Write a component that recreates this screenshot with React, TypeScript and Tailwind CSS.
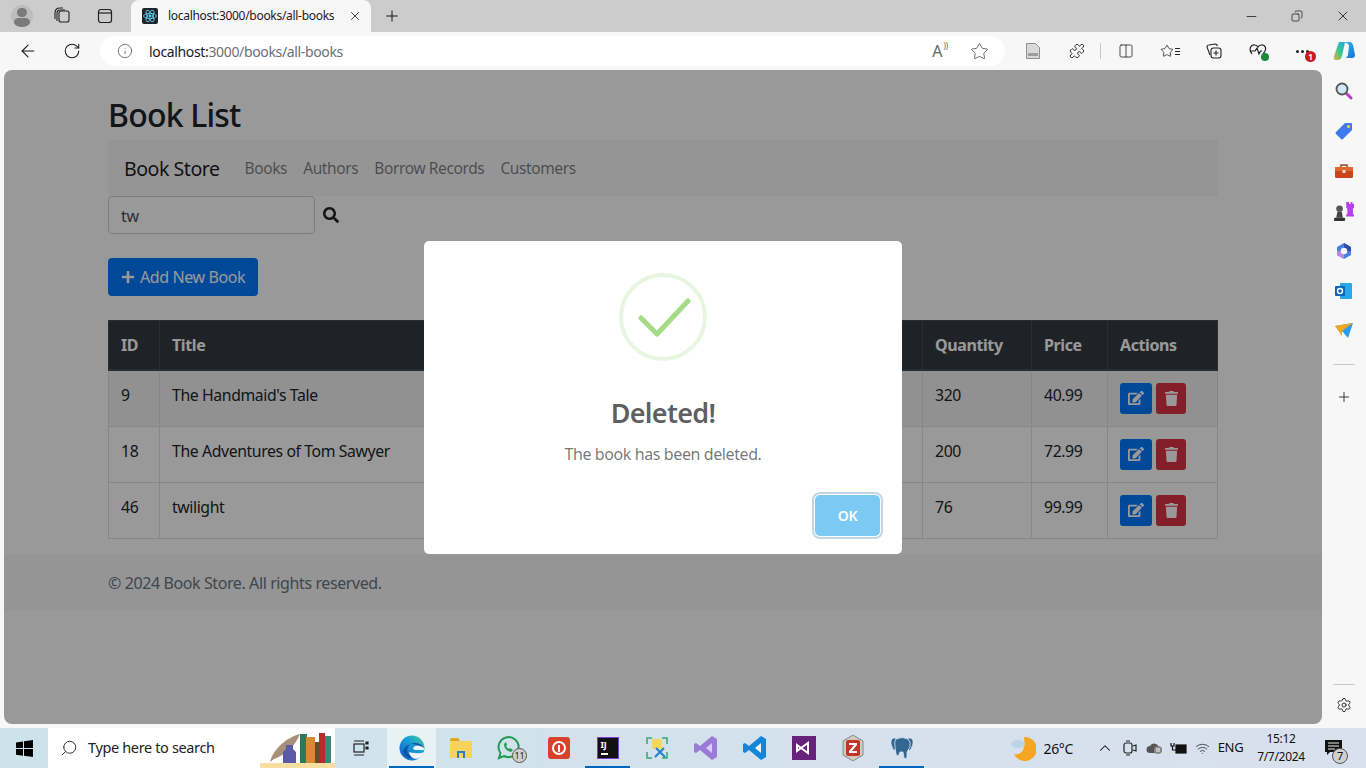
import React from 'react';
import {
  ArrowLeft, RotateCw, Info, Star, Plus, X, Minus, Search, Copy, Puzzle, Columns2, Settings, ChevronUp, Wifi,
} from 'lucide-react';
import { FaEdit, FaPlus, FaSearch, FaTrash } from 'react-icons/fa';

const books = [
  { id: 9, title: "The Handmaid's Tale", quantity: 320, price: '40.99' },
  { id: 18, title: 'The Adventures of Tom Sawyer', quantity: 200, price: '72.99' },
  { id: 46, title: 'twilight', quantity: 76, price: '99.99' },
];

const Slot: React.FC<{ children?: React.ReactNode }> = ({ children }) => (
  <div className="w-11 h-[38px] flex items-center justify-center shrink-0 relative">{children}</div>
);

const TabStrip = () => (
  <div className="h-8 bg-[#cccccc] flex items-end shrink-0">
    <div className="w-[33px] h-8 flex items-center justify-end">
      <div className="w-[22px] h-[22px] rounded-full bg-[#bdbdbd] overflow-hidden flex flex-col items-center">
        <div className="w-[10px] h-[10px] rounded-full bg-[#7a7a7a] mt-[3px]"></div>
        <div className="w-[16px] h-[10px] rounded-full bg-[#7a7a7a] mt-[1px]"></div>
      </div>
    </div>
    <div className="w-[40px] h-8 ml-[-2px] flex items-center justify-end">
      <svg width="18" height="18" viewBox="0 0 18 18" fill="none" stroke="#222" strokeWidth="1.1">
        <rect x="6" y="4" width="10" height="11" rx="2" />
        <path d="M4 14V6q0-3 3-3h5M2 12V6q0-5 5-5h3" />
      </svg>
    </div>
    <div className="w-[42px] h-8 flex items-center justify-end mr-[18px]">
      <svg width="16" height="16" viewBox="0 0 16 16" fill="none" stroke="#222" strokeWidth="1.2">
        <rect x="1.5" y="1.5" width="13" height="13" rx="2.5" />
        <path d="M1.5 5h13" />
      </svg>
    </div>
    <div className="w-[240px] h-8 bg-[#f7f7f7] rounded-t-lg flex items-center pl-[11px] pr-[9px]">
      <svg width="16" height="16" viewBox="0 0 16 16" className="shrink-0">
        <rect width="16" height="16" rx="2" fill="#20232a" />
        <g fill="none" stroke="#61dafb" strokeWidth="0.8">
          <ellipse cx="8" cy="8" rx="6.5" ry="2.6" />
          <ellipse cx="8" cy="8" rx="6.5" ry="2.6" transform="rotate(60 8 8)" />
          <ellipse cx="8" cy="8" rx="6.5" ry="2.6" transform="rotate(120 8 8)" />
        </g>
        <circle cx="8" cy="8" r="1.4" fill="#61dafb" />
      </svg>
      <span className="ml-[10px] text-[12px] text-[#1a1a1a] flex-1 truncate">localhost:3000/books/all-books</span>
      <X size={14} strokeWidth={1.5} className="text-[#222]" />
    </div>
    <div className="w-[42px] h-8 flex items-center justify-center">
      <Plus size={18} strokeWidth={1.3} className="text-[#111]" />
    </div>
    <div className="flex-1"></div>
    <div className="w-[46px] h-8 flex items-center justify-center"><Minus size={15} strokeWidth={1.2} className="text-[#111]" /></div>
    <div className="w-[46px] h-8 flex items-center justify-center"><Copy size={12} strokeWidth={1.4} className="text-[#111] -scale-x-100" /></div>
    <div className="w-[46px] h-8 flex items-center justify-center"><X size={16} strokeWidth={1.2} className="text-[#111]" /></div>
  </div>
);

const Toolbar = () => (
  <div className="h-[38px] bg-[#f7f7f7] flex items-start pl-[6px] shrink-0">
    <Slot><ArrowLeft size={20} strokeWidth={1.3} className="text-[#1a1a1a]" /></Slot>
    <Slot><RotateCw size={18} strokeWidth={1.4} className="text-[#1a1a1a]" /></Slot>
    <div className="ml-[6px] mt-1 w-[905px] h-[30px] bg-white rounded-full flex items-center pl-[17px] pr-[16px] shrink-0">
      <Info size={16} strokeWidth={1.2} className="text-[#555]" />
      <span className="ml-4 text-[14px] text-[#6a7078]"><span className="text-[#1a1a1a]">localhost:</span>3000/books/all-books</span>
      <div className="flex-1"></div>
      <div className="relative mr-[28px] text-[16px] text-[#666] leading-none">A<span className="absolute -right-[6px] -top-[1px] text-[8px]">))</span></div>
      <Star size={19} strokeWidth={1.1} className="text-[#555]" />
    </div>
    <div className="ml-[6px] flex">
      <Slot>
        <svg width="14" height="16" viewBox="0 0 14 16"><path d="M.5.5h9l4 4v11H.5z" fill="#d9d9d9" stroke="#8f8f8f" /><rect x="2" y="10" width="10" height="3" fill="#9d9d9d" /></svg>
      </Slot>
      <Slot><Puzzle size={16} strokeWidth={1.3} className="text-[#222]" /></Slot>
    </div>
    <div className="w-px h-4 bg-[#c9c9c9] mt-[11px] mx-[1px] shrink-0"></div>
    <div className="flex ml-[2px]">
      <Slot><Columns2 size={16} strokeWidth={1.2} className="text-[#222]" /></Slot>
      <Slot>
        <div className="flex items-center">
          <Star size={14} strokeWidth={1.3} className="text-[#222]" />
          <div className="flex flex-col gap-[2px] ml-[1px]"><div className="w-[5px] h-px bg-[#222]"></div><div className="w-[5px] h-px bg-[#222]"></div><div className="w-[5px] h-px bg-[#222]"></div></div>
        </div>
      </Slot>
      <Slot>
        <svg width="18" height="18" viewBox="0 0 18 18" fill="none" stroke="#222" strokeWidth="1.1">
          <path d="M5 13 2 5q0-2 2-2l6-1q2 0 2.5 2" />
          <rect x="6" y="6" width="10" height="10" rx="2.5" fill="#f7f7f7" />
          <path d="M11 8.5v5M8.5 11h5" />
        </svg>
      </Slot>
      <Slot>
        <div className="relative">
          <svg width="18" height="17" viewBox="0 0 18 17" fill="none" stroke="#222" strokeWidth="1.2">
            <path d="M3 11C-1 6 2 1 6 2q2 .4 3 2 1-1.6 3-2c4-1 7 4 2 9" />
            <path d="M1 8h5l2-3 2 6 1.5-3H13" />
          </svg>
          <div className="absolute -right-[2px] -bottom-[1px] w-[8px] h-[8px] rounded-full bg-[#1a8a3a]"></div>
        </div>
      </Slot>
      <Slot>
        <div className="flex gap-[2px]"><div className="w-[3px] h-[3px] rounded-full bg-[#222]"></div><div className="w-[3px] h-[3px] rounded-full bg-[#222]"></div><div className="w-[3px] h-[3px] rounded-full bg-[#222]"></div></div>
        <div className="absolute left-[25px] top-[19px] w-[11px] h-[11px] rounded-full bg-[#c71c22] text-white text-[8px] leading-[11px] text-center font-bold">1</div>
      </Slot>
      <div className="w-[40px] h-[38px] flex items-center justify-center shrink-0">
        <svg width="24" height="24" viewBox="0 0 24 24">
          <defs>
            <linearGradient id="cp1" x1="0" y1="0" x2="1" y2="1"><stop offset="0" stopColor="#27c2e8" /><stop offset="1" stopColor="#1b6fd8" /></linearGradient>
            <linearGradient id="cp2" x1="0" y1="1" x2="1" y2="0"><stop offset="0" stopColor="#f5b13d" /><stop offset="0.5" stopColor="#35c98c" /><stop offset="1" stopColor="#2aa7ee" /></linearGradient>
          </defs>
          <path d="M7 3h6l-3 14q-1 4-4 4H3q-2-1-1-4z" fill="url(#cp2)" />
          <path d="M11 3h7q2 0 3 3l2 10q0 3-3 3h-7q3-1 3-4l1-8q0-3-6-4z" fill="url(#cp1)" />
        </svg>
      </div>
    </div>
  </div>
);

const BookTable = () => (
  <table className="w-full table-fixed border-collapse mt-6">
    <thead>
      <tr className="bg-[#343a40] text-white font-bold text-left">
        <th className="w-[51px] h-[49px] px-3 border border-[#454d55] border-b-2">ID</th>
        <th className="px-3 border border-[#454d55] border-b-2">Title</th>
        <th className="w-[109px] px-3 border border-[#454d55] border-b-2">Quantity</th>
        <th className="w-[76px] px-3 border border-[#454d55] border-b-2">Price</th>
        <th className="w-[110px] px-3 border border-[#454d55] border-b-2">Actions</th>
      </tr>
    </thead>
    <tbody className="text-[15.8px]">
      {books.map((book, i) => (
        <tr key={book.id} className={i === 0 ? 'bg-black/5' : ''}>
          <td className="px-3 pt-[13px] pb-[11px] align-top border border-[#dee2e6]">{book.id}</td>
          <td className="px-3 pt-[13px] pb-[11px] align-top border border-[#dee2e6]">{book.title}</td>
          <td className="px-3 pt-[13px] pb-[11px] align-top border border-[#dee2e6]">{book.quantity}</td>
          <td className="px-3 pt-[13px] pb-[11px] align-top border border-[#dee2e6]">{book.price}</td>
          <td className="p-3 align-top border border-[#dee2e6]">
            <div className="flex gap-1">
              <button className="w-8 h-[31px] bg-[#007bff] rounded-[3px] flex items-center justify-center text-white"><FaEdit size={16} /></button>
              <button className="w-[30px] h-[31px] bg-[#dc3545] rounded-[3px] flex items-center justify-center text-white"><FaTrash size={15} /></button>
            </div>
          </td>
        </tr>
      ))}
    </tbody>
  </table>
);

const Page = () => (
  <div className="w-[1318px] h-[654px] bg-white text-[#212529] rounded-lg overflow-hidden relative shrink-0">
    <div className="w-[1110px] ml-[104px] pt-[26px]">
      <h1 className="text-[32px] leading-[38px] font-medium mb-[6px]">Book List</h1>
      <nav className="h-14 bg-[#f8f9fa] flex items-center px-4 pt-px">
        <span className="text-[19.6px] text-black/90 mr-[17px]">Book Store</span>
        <div className="flex text-[15.5px] text-black/50">
          <a className="px-2">Books</a>
          <a className="px-2">Authors</a>
          <a className="px-2">Borrow Records</a>
          <a className="px-2">Customers</a>
        </div>
      </nav>
      <div className="flex items-center">
        <div className="w-[207px] h-[38px] border border-[#ced4da] rounded px-3 pt-[1px] flex items-center text-[#495057]">tw</div>
        <FaSearch size={16} className="ml-2 text-[#212529]" />
      </div>
      <button className="mt-6 h-[38px] w-[150px] bg-[#007bff] text-white rounded flex items-center pl-[13px] gap-[5px]">
        <FaPlus size={14} />
        Add New Book
      </button>
      <BookTable />
    </div>
    <footer className="mt-4 h-14 bg-[#f8f9fa] flex items-center pl-[104px] text-[#6c757d]">
      © 2024 Book Store. All rights reserved.
    </footer>
    <div className="absolute inset-0 bg-black/40 flex items-center justify-center">
      <div className="w-[478px] h-[313px] bg-white rounded-[5px] flex flex-col items-center pt-8">
        <svg width="88" height="88" viewBox="0 0 88 88" fill="none">
          <circle cx="44" cy="44" r="42" stroke="#a5dc86" strokeOpacity="0.25" strokeWidth="4" />
          <path d="M22 45 38 61 69 28" stroke="#a5dc86" strokeWidth="5" strokeLinecap="round" strokeLinejoin="round" />
        </svg>
        <h2 className="mt-[34px] text-[27px] leading-[36px] font-semibold text-black/65">Deleted!</h2>
        <p className="mt-[11px] leading-6 text-black/55">The book has been deleted.</p>
        <div className="w-full flex justify-end pr-[22px] mt-[29px]">
          <button className="w-[65px] h-[41px] bg-[#7cc9f4] text-white text-[14px] font-semibold rounded-[5px] shadow-[0_0_0_1px_#fff,0_0_0_3px_rgba(43,114,165,0.29)]">OK</button>
        </div>
      </div>
    </div>
  </div>
);

const SidebarIcon: React.FC<{ children?: React.ReactNode }> = ({ children }) => (
  <div className="h-10 flex items-center justify-center shrink-0">{children}</div>
);

const Sidebar = () => (
  <div className="w-11 flex flex-col items-stretch pt-[1px] shrink-0">
    <SidebarIcon>
      <svg width="18" height="18" viewBox="0 0 18 18" fill="none">
        <path d="M11 11l5 5" stroke="#b83ec9" strokeWidth="3" strokeLinecap="round" />
        <circle cx="7" cy="7" r="5.5" fill="#cfeaf5" stroke="#555" strokeWidth="1.8" />
      </svg>
    </SidebarIcon>
    <SidebarIcon>
      <svg width="18" height="18" viewBox="0 0 18 18"><path d="M10 1h6q1 0 1 1v6L8 17q-1 1-2 0l-5-5q-1-1 0-2z" fill="#3f78f0" /><circle cx="13.5" cy="4.5" r="1.6" fill="#f6d24a" /></svg>
    </SidebarIcon>
    <SidebarIcon>
      <svg width="18" height="16" viewBox="0 0 18 16"><path d="M6 4V2h6v2" fill="none" stroke="#8a4a2a" strokeWidth="1.5" /><rect y="4" width="18" height="11" rx="1.5" fill="#c8451d" /><rect y="4" width="18" height="4" fill="#e0672e" /><rect x="7.5" y="7" width="3" height="3" fill="#ddd" /></svg>
    </SidebarIcon>
    <SidebarIcon>
      <svg width="20" height="20" viewBox="0 0 18 18"><path d="M12 1h1.500v1.500H15V1h1.500v1.500H18V6l-1 1v5h1v2h-7v-2h1V7l-1-1V1z" fill="#b83ef0" /><circle cx="5" cy="7" r="3" fill="#555" /><path d="M3 10h4l1 5H2z" fill="#444" /><rect y="15" width="10" height="3" rx="1" fill="#333" /></svg>
    </SidebarIcon>
    <SidebarIcon>
      <svg width="18" height="18" viewBox="0 0 18 18"><path d="M9 1 16 5v8l-7 4-7-4V5z" fill="#4d7fe0" /><path d="M9 1 16 5v4H9z" fill="#2b4ea8" /><path d="M9 17l-7-4V9h7z" fill="#b58be8" /><circle cx="9" cy="9" r="3.200" fill="#f7f7f7" /></svg>
    </SidebarIcon>
    <SidebarIcon>
      <svg width="18" height="18" viewBox="0 0 18 18"><rect x="5" y="1" width="12" height="16" rx="1" fill="#28a8ea" /><rect y="4" width="10" height="10" rx="1" fill="#0a64b8" /><circle cx="5" cy="9" r="2.500" fill="none" stroke="#fff" strokeWidth="1.400" /></svg>
    </SidebarIcon>
    <SidebarIcon>
      <svg width="18" height="16" viewBox="0 0 18 16"><path d="M0 3 18 0 13 15 8 9z" fill="#2a9cee" /><path d="M0 3 18 0 7 8v5z" fill="#f2a51e" /></svg>
    </SidebarIcon>
    <div className="h-px bg-[#c9c9c9] mx-[11px] mt-[13px]"></div>
    <div className="h-[63px] pt-px flex items-center justify-center"><Plus size={16} strokeWidth={1.3} className="text-[#222]" /></div>
    <div className="flex-1"></div>
    <div className="h-px bg-[#c9c9c9] mx-[11px]"></div>
    <div className="h-[39px] flex items-center justify-center"><Settings size={16} strokeWidth={1.4} className="text-[#222]" /></div>
  </div>
);

const TaskIcon: React.FC<{ active?: boolean; tinted?: boolean; children?: React.ReactNode }> = ({ active, tinted, children }) => (
  <div className={`w-[49px] h-10 flex items-center justify-center relative shrink-0 ${tinted ? 'bg-white/50' : ''}`}>
    {children}
    {active && <div className="absolute left-[2px] right-[2px] bottom-0 h-[2px] bg-[#0067c0]"></div>}
  </div>
);

const Taskbar = () => (
  <div className="h-10 shrink-0 flex items-center bg-gradient-to-r from-[#cde3ec] to-[#d9e0ee] text-[#111]">
    <div className="w-12 flex items-center justify-center">
      <svg width="17" height="17" viewBox="0 0 17 17" fill="#000"><path d="M0 2.400 7 1.400v6.700H0zM8 1.300 17 0v8.100H8zM0 9h7v6.700L0 14.700zM8 9h9v8L8 15.800z" /></svg>
    </div>
    <div className="w-[287px] h-10 bg-white flex items-center relative overflow-hidden">
      <Search size={18} strokeWidth={1.2} className="ml-[12px] -scale-x-100 text-[#222]" />
      <span className="ml-[10px] text-[14.5px] text-[#222]">Type here to search</span>
      <svg width="76" height="40" viewBox="0 0 76 40" className="absolute right-0 top-0">
        <path d="M1 35h75v5H1z" fill="#f6dfa0" />
        <path d="M11 34C14 22 26 10 41 6 36 18 28 26 15 31z" fill="#a89078" />
        <rect x="41" y="6" width="7" height="29" fill="#2a7a5a" />
        <rect x="47" y="9" width="9" height="26" fill="#d98a2c" />
        <rect x="56" y="14" width="4" height="21" fill="#6a4a2a" />
        <rect x="60" y="5" width="6" height="30" fill="#b92b2b" />
        <rect x="66" y="8" width="6" height="27" fill="#3a8a7a" />
        <path d="M27 17h7v4l3 3v11H24V24l3-3z" fill="#5a5aa8" />
      </svg>
    </div>
    <div className="w-[52px] flex items-center justify-center">
      <svg width="16" height="16" viewBox="0 0 16 16" fill="none" stroke="#222" strokeWidth="1.200"><rect x="1" y="4" width="10" height="8" /><path d="M1 1h10M1 15h10" /><path d="M13 2h2v2h-2zM13 7h2v2h-2z" fill="#222" /></svg>
    </div>
    <TaskIcon active tinted>
      <svg width="26" height="26" viewBox="0 0 26 26">
        <defs><linearGradient id="edge" x1="0" y1="1" x2="1" y2="0"><stop offset="0" stopColor="#0c5cc0" /><stop offset="0.6" stopColor="#1aa0d8" /><stop offset="1" stopColor="#4ad08a" /></linearGradient></defs>
        <circle cx="13" cy="13" r="12.500" fill="url(#edge)" />
        <path d="M25 15q-1-7-9-7-7 0-8 7 0 6 8 8-11 1-12-7 2-6 9-7 7 0 12 6z" fill="#0e4ea3" />
        <path d="M25.500 15c0-3-5-5-9-4-3 1-3 4 0 4h9zM17 18q4 1 8-1-2 6-8 7-6-1-7-7 2 1 7 1z" fill="#eef4f8" />
      </svg>
    </TaskIcon>
    <TaskIcon>
      <svg width="22" height="20" viewBox="0 0 22 20"><path d="M0 2q0-2 2-2h6l2 3H0z" fill="#e0a81c" /><rect y="3" width="22" height="17" rx="1" fill="#f7d25c" /><path d="M7 13h8v7H7z" fill="#2a7fd0" /><path d="M9 15h4v5H9z" fill="#f7d25c" /></svg>
    </TaskIcon>
    <TaskIcon>
      <div className="relative -ml-[3px]">
        <svg width="24" height="24" viewBox="0 0 24 24" fill="none" stroke="#1f9d4d" strokeWidth="2"><path d="M3 22l1.500-5A10 10 0 1 1 8 20z" /><path d="M8 8q0 6 7 8l2-2-3-2-1 1q-2-1-3-3l1-1-1-3z" fill="#1f9d4d" stroke="none" /></svg>
        <div className="absolute -right-[7px] -bottom-[3px] w-[15px] h-[15px] rounded-full bg-[#cfcfcf] border border-[#555] text-[9px] leading-[13px] text-center text-[#222]">11</div>
      </div>
    </TaskIcon>
    <TaskIcon>
      <div className="w-[22px] h-[22px] bg-[#d8412a] rounded-[3px] flex items-center justify-center">
        <div className="w-[14px] h-[14px] rounded-full border-2 border-white flex items-center justify-center"><div className="w-[2px] h-[7px] bg-white"></div></div>
      </div>
    </TaskIcon>
    <TaskIcon active>
      <div className="w-[22px] h-[22px] bg-[#111] border border-[#7a3fd0] flex flex-col pl-[3px] pt-[2px] text-white">
        <span className="text-[9px] leading-[10px] font-bold">IJ</span>
        <div className="w-[7px] h-[2px] bg-white mt-[3px]"></div>
      </div>
    </TaskIcon>
    <TaskIcon>
      <svg width="22" height="22" viewBox="0 0 22 22" fill="none"><path d="M6 2h10v10H6z" fill="#f3d65a" /><path d="M1 7V1h5M16 1h5v6M1 15v6h5M21 15v6h-5" stroke="#35a86b" strokeWidth="1.500" /><path d="M9 20l9-9M10 11l9 9" stroke="#1f7fd0" strokeWidth="2" /></svg>
    </TaskIcon>
    <TaskIcon>
      <svg width="24" height="26" viewBox="0 0 24 26"><path d="M18 1 23 4v18l-5 3L6 15l-4 3-2-1V9l2-1 4 3z" fill="#9a7bd8" /><path d="M18 8v10l-6-5z" fill="#dccdf5" /></svg>
    </TaskIcon>
    <TaskIcon>
      <svg width="24" height="26" viewBox="0 0 24 26"><path d="M18 1 23 4v18l-5 3L6 15l-4 3-2-1V9l2-1 4 3z" fill="#1585d8" /><path d="M18 8v10l-6-5z" fill="#e8f4fc" /></svg>
    </TaskIcon>
    <TaskIcon>
      <div className="w-[24px] h-[24px] bg-[#68217a] flex items-center justify-center">
        <svg width="16" height="14" viewBox="0 0 16 14" fill="none" stroke="#fff" strokeWidth="2"><path d="M1 4l4 3-4 3zM5 7l7-5v10z" /></svg>
      </div>
    </TaskIcon>
    <TaskIcon>
      <svg width="22" height="26" viewBox="0 0 22 26"><path d="M11 0l10 6v14l-10 6L1 20V6z" fill="#cfc9c4" stroke="#888" /><rect x="4" y="5" width="14" height="16" rx="2" fill="#c43327" /><path d="M7 8h8v2l-5 6h5v2H7v-2l5-6H7z" fill="#f3f3f3" /></svg>
    </TaskIcon>
    <TaskIcon active>
      <svg width="24" height="24" viewBox="0 0 24 24" fill="#336791" stroke="#dfe8ee" strokeWidth="0.8">
        <path d="M6 2Q0 1 1 8q1 5 4 7l2-6z" />
        <path d="M18 2q6-1 5 6-1 5-4 7l-2-6z" />
        <path d="M6 3q6-3 12 0 3 3 2 8l-3 5v5q-1 3-3 1l-1-6h-3l-1 3q-2 2-3-1L5 11Q4 5 6 3z" />
      </svg>
    </TaskIcon>
    <div className="flex-1"></div>
    <div className="flex items-center mr-[23px]">
      <svg width="26" height="26" viewBox="0 0 26 26"><path d="M14 2a12 12 0 1 1-10 17q12 2 10-17z" fill="#f5a623" /><ellipse cx="8" cy="9" rx="7" ry="4" fill="#bcd3ea" /></svg>
      <span className="ml-[8px] text-[14px]">26°C</span>
    </div>
    <ChevronUp size={18} strokeWidth={1.400} className="mr-[4px]" />
    <div className="w-6 flex justify-center">
      <svg width="14" height="16" viewBox="0 0 14 16" fill="none" stroke="#222" strokeWidth="1.200"><rect x="1" y="3" width="8" height="10" rx="2" /><path d="M10 6l3-1v6l-3-1M3 1h4M3 15h4" /></svg>
    </div>
    <div className="w-6 flex justify-center">
      <svg width="17" height="14" viewBox="0 0 17 14"><path d="M4 12a3.500 3.500 0 0 1 0-7 5 5 0 0 1 9 1 3 3 0 0 1 0 6z" fill="#555" /><circle cx="12" cy="9" r="4" fill="#888" /><path d="M11 7v4M13 7v4" stroke="#fff" /></svg>
    </div>
    <div className="w-6 flex justify-center">
      <svg width="17" height="13" viewBox="0 0 17 13" fill="none" stroke="#111" strokeWidth="1.200"><rect x="6" y="3" width="10" height="8" fill="#111" /><path d="M1 1v3h3V1M2.500 4v4H6" /></svg>
    </div>
    <div className="w-6 flex justify-center"><Wifi size={15} strokeWidth={1.300} className="text-[#333]" /></div>
    <span className="ml-px text-[13px] w-[31px] text-center">ENG</span>
    <div className="w-[46px] flex flex-col items-center text-[12px] leading-[18px] ml-[12px] mr-[10px] whitespace-nowrap">
      <span>15:12</span>
      <span>7/7/2024</span>
    </div>
    <div className="w-[38px] mr-[14px] relative flex justify-center">
      <svg width="17" height="16" viewBox="0 0 17 16"><path d="M0 0h17v12H5l-3 3v-3H0z" fill="#111" /><path d="M3 3h11M3 6h11M3 9h7" stroke="#eee" /></svg>
      <div className="absolute left-[18px] top-[8px] w-[16px] h-[16px] rounded-full bg-[#cfcfcf] border border-[#555] text-[11px] leading-[14px] text-center">7</div>
    </div>
  </div>
);

const App: React.FC = () => (
  <div className="w-[1366px] h-[768px] overflow-hidden flex flex-col bg-[#f7f7f7] font-['Noto_Sans',sans-serif] text-[16px] [&_*]:tracking-[-0.025em]">
    <TabStrip />
    <Toolbar />
    <div className="h-[658px] flex pl-1 pb-1 shrink-0">
      <Page />
      <Sidebar />
    </div>
    <Taskbar />
  </div>
);

export default App;
